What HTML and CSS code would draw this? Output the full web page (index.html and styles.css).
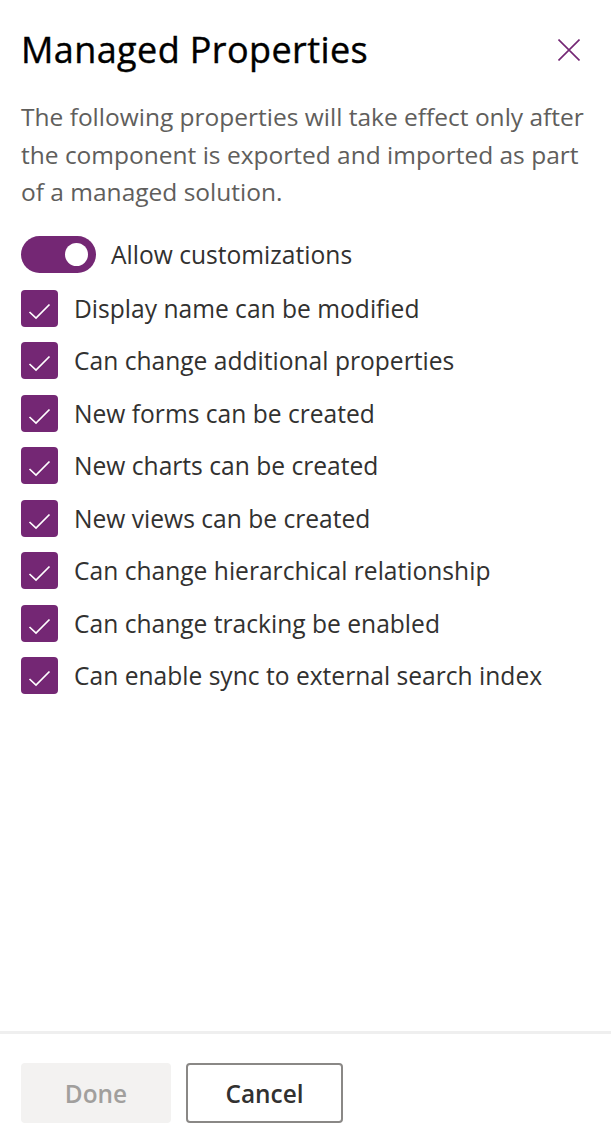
FILE: index.html
```html
<!DOCTYPE html>
<html lang="en">
<head>
    <meta charset="UTF-8">
    <meta name="viewport" content="width=device-width, initial-scale=1.0">
    <title>Managed Properties</title>
    <link rel="stylesheet" href="styles.css">
</head>
<body>
    <div class="panel">
        <div class="content">
            <div class="header">
                <h1>Managed Properties</h1>
                <button class="close" aria-label="Close">
                    <svg width="22" height="22" viewBox="0 0 22 22">
                        <path d="M0.5 0.5 L21.5 21.5 M21.5 0.5 L0.5 21.5" stroke="#742774" stroke-width="1.6" fill="none"/>
                    </svg>
                </button>
            </div>
            <p class="desc">The following properties will take effect only after the component is exported and imported as part of a managed solution.</p>

            <div class="options">
                <label class="toggle-row">
                    <span class="toggle"><span class="knob"></span></span>
                    <span class="text">Allow customizations</span>
                </label>
                <label class="check-row">
                    <span class="box"><svg width="37" height="37" viewBox="0 0 37 37"><path d="M8.5 22 L15 28 L28.5 14.5" stroke="#fff" stroke-width="1.7" fill="none"/></svg></span>
                    <span class="text">Display name can be modified</span>
                </label>
                <label class="check-row">
                    <span class="box"><svg width="37" height="37" viewBox="0 0 37 37"><path d="M8.5 22 L15 28 L28.5 14.5" stroke="#fff" stroke-width="1.7" fill="none"/></svg></span>
                    <span class="text">Can change additional properties</span>
                </label>
                <label class="check-row">
                    <span class="box"><svg width="37" height="37" viewBox="0 0 37 37"><path d="M8.5 22 L15 28 L28.5 14.5" stroke="#fff" stroke-width="1.7" fill="none"/></svg></span>
                    <span class="text">New forms can be created</span>
                </label>
                <label class="check-row">
                    <span class="box"><svg width="37" height="37" viewBox="0 0 37 37"><path d="M8.5 22 L15 28 L28.5 14.5" stroke="#fff" stroke-width="1.7" fill="none"/></svg></span>
                    <span class="text">New charts can be created</span>
                </label>
                <label class="check-row">
                    <span class="box"><svg width="37" height="37" viewBox="0 0 37 37"><path d="M8.5 22 L15 28 L28.5 14.5" stroke="#fff" stroke-width="1.7" fill="none"/></svg></span>
                    <span class="text">New views can be created</span>
                </label>
                <label class="check-row">
                    <span class="box"><svg width="37" height="37" viewBox="0 0 37 37"><path d="M8.5 22 L15 28 L28.5 14.5" stroke="#fff" stroke-width="1.7" fill="none"/></svg></span>
                    <span class="text">Can change hierarchical relationship</span>
                </label>
                <label class="check-row">
                    <span class="box"><svg width="37" height="37" viewBox="0 0 37 37"><path d="M8.5 22 L15 28 L28.5 14.5" stroke="#fff" stroke-width="1.7" fill="none"/></svg></span>
                    <span class="text">Can change tracking be enabled</span>
                </label>
                <label class="check-row">
                    <span class="box"><svg width="37" height="37" viewBox="0 0 37 37"><path d="M8.5 22 L15 28 L28.5 14.5" stroke="#fff" stroke-width="1.7" fill="none"/></svg></span>
                    <span class="text">Can enable sync to external search index</span>
                </label>
            </div>
        </div>

        <div class="footer">
            <button class="btn btn-done" disabled>Done</button>
            <button class="btn btn-cancel">Cancel</button>
        </div>
    </div>
</body>
</html>
```

FILE: styles.css
```css
body {
    margin: 0;
    font-family: "Segoe UI", "Open Sans", sans-serif;
    background: #fff;
    color: #323130;
}
.panel {
    height: 1144px;
    display: flex;
    flex-direction: column;
}
.content {
    flex: 1;
    padding: 0 12px 0 21px;
}
.header {
    display: flex;
    align-items: center;
    justify-content: space-between;
    padding-top: 27px;
}
h1 {
    margin: 0;
    font-size: 36px;
    font-weight: 500;
    letter-spacing: 0.4px;
    line-height: 46px;
    color: #000;
    -webkit-text-stroke: 0.4px #000;
}
.close {
    border: 0;
    background: none;
    padding: 0;
    margin-right: 19px;
    width: 22px;
    height: 22px;
    display: flex;
}
.desc {
    margin: 25px 0 0;
    font-size: 24.5px;
    line-height: 37.5px;
    color: #605e5c;
}
.options {
    margin-top: 25px;
    display: flex;
    flex-direction: column;
    gap: 15.5px;
}
.toggle-row, .check-row {
    display: flex;
    align-items: center;
    font-size: 24.6px;
    color: #323130;
    height: 37px;
}
.toggle-row {
    gap: 15px;
    margin-bottom: 1.5px;
}
.check-row {
    gap: 16px;
}
.toggle {
    width: 75px;
    height: 37px;
    border-radius: 19px;
    background: #742774;
    display: flex;
    align-items: center;
    justify-content: flex-end;
    padding-right: 8px;
    box-sizing: border-box;
}
.knob {
    width: 23px;
    height: 23px;
    border-radius: 50%;
    background: #fff;
}
.box {
    width: 37px;
    height: 37px;
    border-radius: 4px;
    background: #742774;
    display: flex;
    flex-shrink: 0;
}
.footer {
    border-top: 3px solid #efefef;
    padding: 29px 21px 21px;
    display: flex;
    gap: 15px;
}
.btn {
    height: 60px;
    border-radius: 4px;
    font-family: inherit;
    font-size: 24.4px;
    font-weight: 600;
    padding: 0;
}
.btn-done {
    width: 150px;
    background: #f3f2f1;
    border: 0;
    color: #a19f9d;
}
.btn-cancel {
    width: 157px;
    background: #fff;
    border: 2px solid #8a8886;
    color: #323130;
}
```
